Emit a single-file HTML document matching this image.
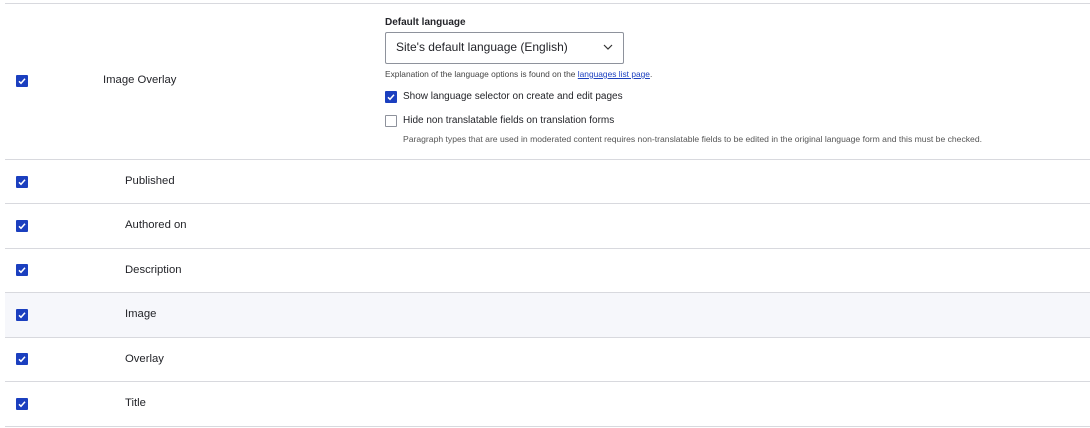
<!DOCTYPE html>
<html><head><style>
body{margin:0;width:1090px;height:428px;background:#fff;font-family:"Liberation Sans",sans-serif;color:#232429;position:relative;overflow:hidden}
.a{position:absolute}
.line{position:absolute;left:5px;right:0;height:1px;background:#d8d9de}
.cb{position:absolute;width:12px;height:12px;background:#1b3fbf;border-radius:1px}
.cb svg{position:absolute;left:0;top:0}
.t{position:absolute;font-size:11.3px;line-height:14px}
</style></head><body>
<div class="line" style="top:3px"></div>
<div class="line" style="top:159px"></div>
<div class="line" style="top:203px"></div>
<div class="line" style="top:248px"></div>
<div class="a" style="left:5px;right:0;top:293px;height:44px;background:#f6f7fb"></div>
<div class="line" style="top:292px"></div>
<div class="line" style="top:337px"></div>
<div class="line" style="top:381px"></div>
<div class="line" style="top:426px"></div>

<div class="cb" style="left:16px;top:75px"><svg width="12" height="12"><path d="M3 6.3l2 2 4-4.5" stroke="#fff" stroke-width="1.5" fill="none"/></svg></div>
<div class="t" style="left:103px;top:73px">Image Overlay</div>

<div class="a" style="left:385px;top:17px;font-size:10px;font-weight:bold">Default language</div>
<div class="a" style="left:385px;top:32px;width:239px;height:32px;border:1px solid #8e929c;border-radius:2px;box-sizing:border-box"></div>
<div class="a" style="left:396px;top:40px;font-size:12px">Site's default language (English)</div>
<svg class="a" style="left:603px;top:44px" width="10" height="7"><path d="M1 1l4 4 4-4" stroke="#333" stroke-width="1.2" fill="none"/></svg>
<div class="a" style="left:385px;top:69px;font-size:8.4px;color:#444">Explanation of the language options is found on the <span style="color:#1b3fbf;text-decoration:underline">languages list page</span>.</div>
<div class="cb" style="left:385px;top:91px"><svg width="12" height="12"><path d="M3 6.3l2 2 4-4.5" stroke="#fff" stroke-width="1.5" fill="none"/></svg></div>
<div class="a" style="left:403px;top:91px;font-size:10px">Show language selector on create and edit pages</div>
<div class="a" style="left:385px;top:115px;width:12px;height:12px;border:1px solid #8e929c;box-sizing:border-box;border-radius:1px"></div>
<div class="a" style="left:403px;top:115px;font-size:10px">Hide non translatable fields on translation forms</div>
<div class="a" style="left:403px;top:134px;font-size:8.6px;color:#555">Paragraph types that are used in moderated content requires non-translatable fields to be edited in the original language form and this must be checked.</div>

<div class="cb" style="left:16px;top:176px"><svg width="12" height="12"><path d="M3 6.3l2 2 4-4.5" stroke="#fff" stroke-width="1.5" fill="none"/></svg></div>
<div class="t" style="left:125px;top:174px">Published</div>
<div class="cb" style="left:16px;top:220px"><svg width="12" height="12"><path d="M3 6.3l2 2 4-4.5" stroke="#fff" stroke-width="1.5" fill="none"/></svg></div>
<div class="t" style="left:125px;top:218px">Authored on</div>
<div class="cb" style="left:16px;top:264px"><svg width="12" height="12"><path d="M3 6.3l2 2 4-4.5" stroke="#fff" stroke-width="1.5" fill="none"/></svg></div>
<div class="t" style="left:125px;top:263px">Description</div>
<div class="cb" style="left:16px;top:309px"><svg width="12" height="12"><path d="M3 6.3l2 2 4-4.5" stroke="#fff" stroke-width="1.5" fill="none"/></svg></div>
<div class="t" style="left:125px;top:307px">Image</div>
<div class="cb" style="left:16px;top:353px"><svg width="12" height="12"><path d="M3 6.3l2 2 4-4.5" stroke="#fff" stroke-width="1.5" fill="none"/></svg></div>
<div class="t" style="left:125px;top:352px">Overlay</div>
<div class="cb" style="left:16px;top:398px"><svg width="12" height="12"><path d="M3 6.3l2 2 4-4.5" stroke="#fff" stroke-width="1.5" fill="none"/></svg></div>
<div class="t" style="left:125px;top:396px">Title</div>
</body></html>
